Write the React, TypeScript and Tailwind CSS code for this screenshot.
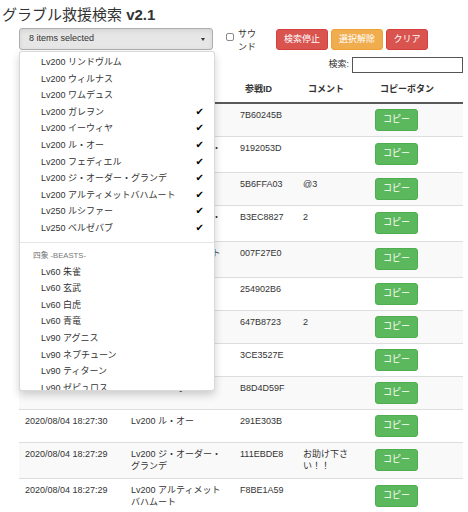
import React from 'react';

type Row = { time: string; name: string; id: string; comment: string };

const rows: Row[] = [
  { time: '2020/08/04 18:27:48', name: 'Lv250 ベルゼバブ', id: '7B60245B', comment: '' },
  { time: '2020/08/04 18:27:47', name: 'Lv200 ジ・オーダー・グランデ', id: '9192053D', comment: '' },
  { time: '2020/08/04 18:27:45', name: 'Lv200 フェディエル', id: '5B6FFA03', comment: '@3' },
  { time: '2020/08/04 18:27:44', name: 'Lv200 ジ・オーダー・グランデ', id: 'B3EC8827', comment: '2' },
  { time: '2020/08/04 18:27:41', name: 'Lv200 アルティメットバハムート', id: '007F27E0', comment: '' },
  { time: '2020/08/04 18:27:38', name: 'Lv200 ガレヲン', id: '254902B6', comment: '' },
  { time: '2020/08/04 18:27:36', name: 'Lv200 イーウィヤ', id: '647B8723', comment: '2' },
  { time: '2020/08/04 18:27:33', name: 'Lv250 ルシファー', id: '3CE3527E', comment: '' },
  { time: '2020/08/04 18:27:31', name: 'Lv200 ル・オー', id: 'B8D4D59F', comment: '' },
  { time: '2020/08/04 18:27:30', name: 'Lv200 ル・オー', id: '291E303B', comment: '' },
  { time: '2020/08/04 18:27:29', name: 'Lv200 ジ・オーダー・グランデ', id: '111EBDE8', comment: 'お助け下さい！！' },
  { time: '2020/08/04 18:27:29', name: 'Lv200 アルティメットバハムート', id: 'F8BE1A59', comment: '' },
  { time: '2020/08/04 18:27:27', name: 'Lv200 イーウィヤ', id: 'A01C44D2', comment: '' },
];

const dragons = [
  { name: 'Lv200 リンドヴルム', on: false },
  { name: 'Lv200 ウィルナス', on: false },
  { name: 'Lv200 ワムデュス', on: false },
  { name: 'Lv200 ガレヲン', on: true },
  { name: 'Lv200 イーウィヤ', on: true },
  { name: 'Lv200 ル・オー', on: true },
  { name: 'Lv200 フェディエル', on: true },
  { name: 'Lv200 ジ・オーダー・グランデ', on: true },
  { name: 'Lv200 アルティメットバハムート', on: true },
  { name: 'Lv250 ルシファー', on: true },
  { name: 'Lv250 ベルゼバブ', on: true },
];

const beasts = [
  'Lv60 朱雀', 'Lv60 玄武', 'Lv60 白虎', 'Lv60 青竜',
  'Lv90 アグニス', 'Lv90 ネプチューン', 'Lv90 ティターン', 'Lv90 ゼピュロス',
  'Lv120 アグニス', 'Lv120 ネプチューン',
];

function MenuItem({ name, on }: { name: string; on?: boolean }) {
  return (
    <div className="flex items-center justify-between h-[16.6px] leading-[16.6px] pl-[21px] pr-[10px] text-[#333] whitespace-nowrap">
      <span>{name}</span>
      {on && <span className="font-['DejaVu_Sans',sans-serif] text-[10px] text-black">✔</span>}
    </div>
  );
}

export default function App() {
  return (
    <div className="relative min-h-[512px] bg-white pt-[5px] pl-[19px] pr-[5px] text-[9px] text-[#333] font-['Liberation_Sans','Noto_Sans_CJK_JP',sans-serif]">
      <h1 className="-ml-[17px] h-[20px] text-[15px] leading-[20px] font-normal">
        グラブル救援検索 <span className="font-bold">v2.1</span>
      </h1>

      <div className="mt-[3px] flex items-start">
        <div className="relative">
          <div className="flex h-[22px] w-[194px] items-center justify-between rounded-[3px] border border-[#adadad] bg-[#e6e6e6] pl-[9px] pr-[7px] shadow-[inset_0_2px_4px_rgba(0,0,0,0.08)]">
            <span>8 items selected</span>
            <span className="h-0 w-0 border-x-[2.5px] border-t-[3px] border-x-transparent border-t-[#333]" />
          </div>

          {/* open dropdown, scrollable list */}
          <div className="absolute left-0 top-[23px] z-10 h-[340px] w-[196px] overflow-hidden rounded-[3px] border border-black/15 bg-white pt-[2px] shadow-[0_4px_8px_rgba(0,0,0,0.18)]">
            {dragons.map(d => (
              <MenuItem key={d.name} name={d.name} on={d.on} />
            ))}
            <div className="my-[5.5px] h-px bg-[#e5e5e5]" />
            <div className="pl-[13px] pb-[2px] text-[7.7px] leading-[13px] text-[#777]">四象 -BEASTS-</div>
            {beasts.map(b => (
              <MenuItem key={b} name={b} />
            ))}
          </div>
        </div>

        <span className="ml-[13px] mt-[5px] h-[8px] w-[8px] rounded-[2px] border border-[#8a8a8a] bg-white" />
        <span className="ml-[4px] w-[19px] leading-[13px]">サウンド</span>

        <div className="ml-[19px] mt-[1px] flex gap-[3px] text-white">
          <button className="h-[21px] w-[52px] rounded-[3px] border border-[#d43f3a] bg-[#d9534f]">検索停止</button>
          <button className="h-[21px] w-[52px] rounded-[3px] border border-[#eea236] bg-[#f0ad4e]">選択解除</button>
          <button className="h-[21px] w-[42px] rounded-[3px] border border-[#d43f3a] bg-[#d9534f]">クリア</button>
        </div>
      </div>

      <div className="mt-[3px] flex items-center justify-end">
        <span>検索:</span>
        <span className="ml-[3px] h-[16px] w-[111px] border border-[#555] bg-white" />
      </div>

      <table className="mt-[3px] w-[444px] table-fixed border-collapse">
        <colgroup>
          <col className="w-[106px]" />
          <col className="w-[109px]" />
          <col className="w-[63px]" />
          <col className="w-[72px]" />
          <col className="w-[94px]" />
        </colgroup>
        <thead>
          <tr className="border-b-2 border-[#5a5a5a]">
            {['時間', 'マルチ名', '参戦ID', 'コメント', 'コピーボタン'].map(h => (
              <th key={h} className="py-[6.5px] pl-[11px] text-left font-bold leading-[12.5px]">{h}</th>
            ))}
          </tr>
        </thead>
        <tbody>
          {rows.map((r, i) => (
            <tr key={r.id} className={i % 2 === 0 ? 'bg-[#f9f9f9]' : 'bg-white'}>
              <td className={`${i === 0 ? '' : 'border-t border-[#ddd]'} py-[5px] pl-[6px] pr-[4px] align-top leading-[12.5px]`}>{r.time}</td>
              <td className={`${i === 0 ? '' : 'border-t border-[#ddd]'} py-[5px] pl-[6px] pr-[6px] align-top leading-[12.5px]`}>{r.name}</td>
              <td className={`${i === 0 ? '' : 'border-t border-[#ddd]'} py-[5px] pl-[6px] pr-[4px] align-top leading-[12.5px]`}>{r.id}</td>
              <td className={`${i === 0 ? '' : 'border-t border-[#ddd]'} py-[5px] pl-[6px] pr-[16px] align-top leading-[12.5px]`}>{r.comment}</td>
              <td className={`${i === 0 ? '' : 'border-t border-[#ddd]'} py-[5px] pl-[6px] align-middle`}>
                <button className="block h-[22px] w-[43px] rounded-[3px] border border-[#4cae4c] bg-[#5cb85c] text-white">コピー</button>
              </td>
            </tr>
          ))}
        </tbody>
      </table>
    </div>
  );
}
